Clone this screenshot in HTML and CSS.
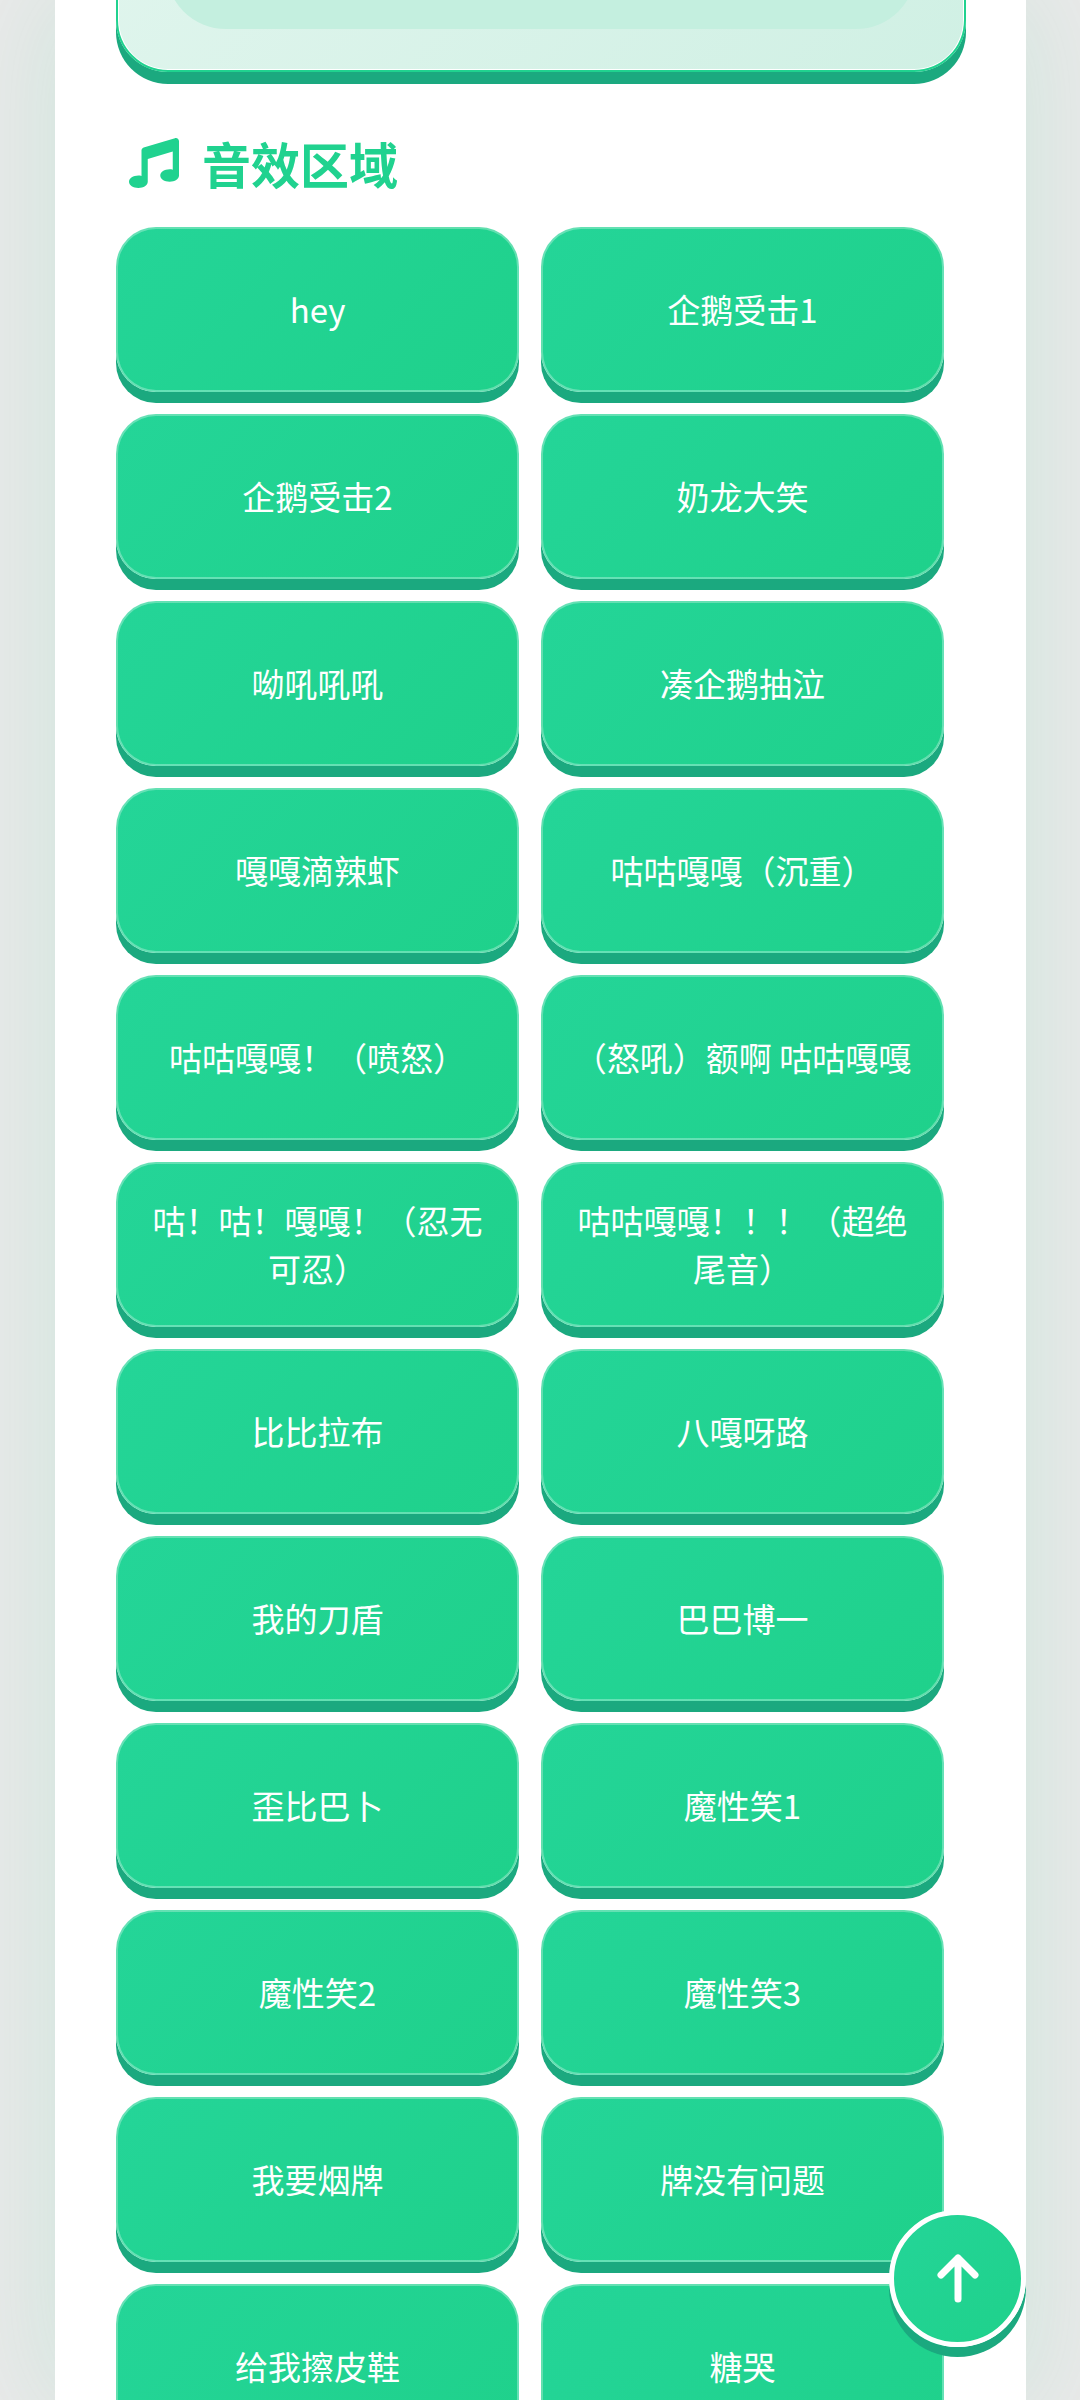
FILE: index.html
```html
<!DOCTYPE html>
<html lang="zh-CN">
<head>
  <meta charset="UTF-8">
  <title>音效区域</title>
  <link rel="stylesheet" href="styles.css">
</head>
<body>

  <div class="page">
    <!-- card above, scrolled mostly out of view -->
    <div class="panel">
      <div class="panel-inner"></div>
    </div>

    <h2 class="section-title">
      <svg class="title-icon" viewBox="0 0 512 512" aria-hidden="true">
        <path d="M511.99 32.01c0-21.71-21.1-37.01-41.6-30.51L150.4 96c-13.3 4.2-22.4 16.5-22.4 30.5v261.42c-10.05-2.38-20.72-3.92-32-3.92-53.02 0-96 28.65-96 64s42.98 64 96 64 96-28.65 96-64V214.31l256-75.02v184.63c-10.05-2.38-20.72-3.92-32-3.92-53.02 0-96 28.65-96 64s42.98 64 96 64 96-28.65 96-64l-.01-351.99z"/>
      </svg>
      音效区域
    </h2>

    <div class="sound-grid">
      <button class="sound-btn">hey</button>
      <button class="sound-btn">企鹅受击1</button>
      <button class="sound-btn">企鹅受击2</button>
      <button class="sound-btn">奶龙大笑</button>
      <button class="sound-btn">呦吼吼吼</button>
      <button class="sound-btn">凑企鹅抽泣</button>
      <button class="sound-btn">嘎嘎滴辣虾</button>
      <button class="sound-btn">咕咕嘎嘎（沉重）</button>
      <button class="sound-btn">咕咕嘎嘎！（喷怒）</button>
      <button class="sound-btn">（怒吼）额啊 咕咕嘎嘎</button>
      <button class="sound-btn">咕！咕！嘎嘎！（忍无可忍）</button>
      <button class="sound-btn">咕咕嘎嘎！！！（超绝尾音）</button>
      <button class="sound-btn">比比拉布</button>
      <button class="sound-btn">八嘎呀路</button>
      <button class="sound-btn">我的刀盾</button>
      <button class="sound-btn">巴巴博一</button>
      <button class="sound-btn">歪比巴卜</button>
      <button class="sound-btn">魔性笑1</button>
      <button class="sound-btn">魔性笑2</button>
      <button class="sound-btn">魔性笑3</button>
      <button class="sound-btn">我要烟牌</button>
      <button class="sound-btn">牌没有问题</button>
      <button class="sound-btn">给我擦皮鞋</button>
      <button class="sound-btn">糖哭</button>
    </div>
  </div>

  <button class="back-top" aria-label="返回顶部">
    <svg viewBox="0 0 48 53" aria-hidden="true">
      <path d="M24 47V6M7 23L24 6l17 17"/>
    </svg>
  </button>

</body>
</html>
```

FILE: styles.css
```css
html, body {
  height: 2400px;
  overflow: hidden;
}

body {
  margin: 0;
  font-family: "Noto Sans CJK SC", "Noto Sans", sans-serif;
  background: #e9e9e9;
}

.page {
  box-sizing: border-box;
  width: 971px;
  height: 2400px;
  margin: 0 54px 0 55px;
  padding: 0 60px 0 61px;
  overflow: hidden;
  background: #fff;
  box-shadow: 0 0 100px rgba(32, 210, 144, 0.14);
}

.panel {
  box-sizing: border-box;
  height: 172px;
  margin-top: -100px;
  padding: 0 48px 41px;
  display: flex;
  align-items: flex-end;
  border: 2px solid #20d28f;
  border-radius: 52px;
  background: linear-gradient(135deg, #e0f5ed, #d0f0e4);
  box-shadow: inset 0 0 0 1px #fff, 0 12px 0 #1ba97f;
}

.panel-inner {
  flex: 1;
  height: 120px;
  border-radius: 60px;
  background: #c4efdf;
}

.section-title {
  display: flex;
  align-items: center;
  gap: 23px;
  margin: 55px 0 28px;
  padding-left: 13px;
  font-size: 49px;
  line-height: 72px;
  font-weight: 700;
  color: #20d28f;
}

.title-icon {
  width: 50px;
  height: 50px;
  fill: #20d28f;
}

.sound-grid {
  display: grid;
  grid-template-columns: 403px 403px;
  gap: 22px;
}

.sound-btn {
  box-sizing: border-box;
  height: 165px;
  padding: 0 28px 2px;
  border: 2px solid rgba(255, 255, 255, 0.3);
  border-radius: 40px;
  background: linear-gradient(135deg, #24d598, #1fd18b);
  box-shadow: 0 11px 0 #1ba97f;
  color: #fff;
  font-family: inherit;
  font-size: 33px;
  line-height: 48px;
}

.back-top {
  position: fixed;
  right: 54px;
  bottom: 53px;
  box-sizing: border-box;
  width: 137px;
  height: 137px;
  padding: 0;
  display: flex;
  align-items: center;
  justify-content: center;
  border: 5px solid #fff;
  border-radius: 50%;
  background: linear-gradient(135deg, #24d598, #1fd18b);
  box-shadow: 0 10px 0 #1ba97f;
}

.back-top svg {
  width: 48px;
  height: 53px;
  fill: none;
  stroke: #fff;
  stroke-width: 7;
  stroke-linecap: round;
  stroke-linejoin: round;
}
```
